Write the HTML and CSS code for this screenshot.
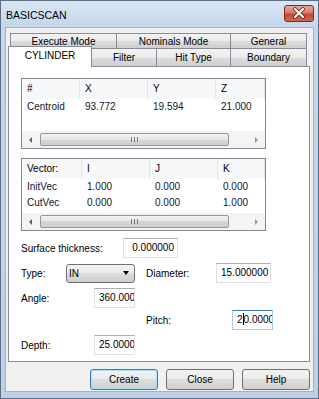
FILE: index.html
```html
<!DOCTYPE html>
<html lang="en">
<head>
    <meta charset="UTF-8">
    <title>BASICSCAN</title>
    <link rel="stylesheet" href="styles.css">
</head>
<body>
    <div class="window">
        <div class="titlebar">
            <span class="title">BASICSCAN</span>
            <div class="close">
                <svg width="14" height="12" viewBox="0 0 14 12">
                    <path d="M3 2 L11 10 M11 2 L3 10" stroke="#5a1c14" stroke-width="3.6" stroke-linecap="round"/>
                    <path d="M3 2 L11 10 M11 2 L3 10" stroke="#ffffff" stroke-width="2.2" stroke-linecap="round"/>
                </svg>
            </div>
        </div>

        <div class="client">
            <div class="tabs">
                <div class="tab-row back">
                    <div class="tab" style="width: 107px;">Execute Mode</div>
                    <div class="tab" style="width: 115px;">Nominals Mode</div>
                    <div class="tab" style="width: 77px;">General</div>
                </div>
                <div class="tab-row front">
                    <div class="tab active" style="width: 84px;">CYLINDER</div>
                    <div class="tab" style="width: 66px;">Filter</div>
                    <div class="tab" style="width: 75px;">Hit Type</div>
                    <div class="tab" style="width: 77px;">Boundary</div>
                </div>
            </div>

            <div class="panel">
                <div class="list list-points">
                    <div class="list-head">
                        <div class="cell c1">#</div>
                        <div class="cell c2">X</div>
                        <div class="cell c3">Y</div>
                        <div class="cell c4">Z</div>
                    </div>
                    <div class="list-body">
                        <div class="list-row">
                            <div class="cell c1">Centroid</div>
                            <div class="cell c2">93.772</div>
                            <div class="cell c3">19.594</div>
                            <div class="cell c4">21.000</div>
                        </div>
                    </div>
                    <div class="hscroll">
                        <div class="arrow left"></div>
                        <div class="thumb"><span class="grip"></span></div>
                        <div class="track"></div>
                        <div class="arrow right"></div>
                    </div>
                </div>

                <div class="list list-vectors">
                    <div class="list-head">
                        <div class="cell c1">Vector:</div>
                        <div class="cell c2">I</div>
                        <div class="cell c3">J</div>
                        <div class="cell c4">K</div>
                    </div>
                    <div class="list-body">
                        <div class="list-row">
                            <div class="cell c1">InitVec</div>
                            <div class="cell c2">1.000</div>
                            <div class="cell c3">0.000</div>
                            <div class="cell c4">0.000</div>
                        </div>
                        <div class="list-row">
                            <div class="cell c1">CutVec</div>
                            <div class="cell c2">0.000</div>
                            <div class="cell c3">0.000</div>
                            <div class="cell c4">1.000</div>
                        </div>
                    </div>
                    <div class="hscroll">
                        <div class="arrow left"></div>
                        <div class="thumb"><span class="grip"></span></div>
                        <div class="track"></div>
                        <div class="arrow right"></div>
                    </div>
                </div>

                <div class="form">
                    <div class="form-row">
                        <span class="label" style="width: 102px;">Surface thickness:</span>
                        <div class="field" style="width: 55px;">0.000000</div>
                    </div>
                    <div class="form-row">
                        <span class="label" style="width: 45px;">Type:</span>
                        <div class="combo">
                            <span>IN</span>
                            <span class="caret-down"></span>
                        </div>
                        <span class="label label-right" style="width: 70px;">Diameter:</span>
                        <div class="field" style="width: 55px;">15.000000</div>
                    </div>
                    <div class="form-row">
                        <span class="label" style="width: 73px;">Angle:</span>
                        <div class="field" style="width: 41px;">360.000000</div>
                    </div>
                    <div class="form-row tight">
                        <span class="label indent" style="width: 86px;">Pitch:</span>
                        <div class="field focus" style="width: 41px;">2<span class="cursor"></span>0.000000</div>
                    </div>
                    <div class="form-row">
                        <span class="label" style="width: 73px;">Depth:</span>
                        <div class="field" style="width: 41px;">25.000000</div>
                    </div>
                </div>
            </div>

            <div class="buttons">
                <button class="btn default">Create</button>
                <button class="btn">Close</button>
                <button class="btn">Help</button>
            </div>
        </div>
    </div>
</body>
</html>
```

FILE: styles.css
```css
body{
    margin: 0;
    font-family: 'Liberation Sans', Arial, sans-serif;
    font-size: 10px;
    color: #000;
    background: #c3d5e9;
}
.window{
    width: 319px;
    height: 399px;
    box-sizing: border-box;
    border: 1px solid #5d7088;
    background: linear-gradient(#dae6f3, #c4d7eb 26px, #bdd0e6);
    display: flex;
    flex-direction: column;
}

/* title bar */
.titlebar{
    height: 26px;
    display: flex;
    align-items: center;
    justify-content: space-between;
    padding: 0 4px 0 5px;
}
.title{
    font-size: 10.5px;
    margin-top: 1px;
}
.close{
    width: 28px;
    height: 15px;
    margin-top: -2px;
    border: 1px solid #7b2a1f;
    border-radius: 3px;
    background: linear-gradient(#e9a99c, #d57a68 45%, #c24a33 55%, #cf6a4e);
    display: flex;
    align-items: center;
    justify-content: center;
}

/* client area */
.client{
    flex: 1;
    margin: 0 4px 6px 4px;
    border: 1px solid #9fb2c8;
    background: #f0f0f0;
    display: flex;
    flex-direction: column;
    padding-top: 5px;
}

/* tabs */
.tab-row{
    display: flex;
}
.tab-row.back{
    height: 15px;
    margin-left: 4px;
}
.tab-row.front{
    height: 18px;
    margin-left: 2px;
}
.tab{
    box-sizing: border-box;
    border: 1px solid #898c95;
    border-bottom: none;
    margin-left: -1px;
    background: linear-gradient(#f3f3f3, #ebebeb 50%, #dddddd 50%, #cfcfcf);
    display: flex;
    align-items: center;
    justify-content: center;
}
.tab-row .tab:first-child{
    margin-left: 0;
}
.tab-row.back .tab{
    height: 15px;
}
.tab-row.front .tab{
    height: 18px;
}
.tab-row.front .tab.active{
    position: relative;
    z-index: 1;
    height: 21px;
    margin-top: -2px;
    background: #fff;
    padding-bottom: 3px;
}

/* panel */
.panel{
    height: 296px;
    box-sizing: border-box;
    margin: 0 3px 0 2px;
    border: 1px solid #898c95;
    background: #fff;
    padding: 11px 0 0 12px;
}

/* list views */
.list{
    width: 245px;
    box-sizing: border-box;
    border: 1px solid #828790;
    display: flex;
    flex-direction: column;
    overflow: hidden;
}
.list-points{
    height: 71px;
}
.list-vectors{
    height: 73px;
    margin-top: 9px;
}
.list-head, .list-row{
    display: flex;
}
.list-head{
    height: 20px;
    background: #f7f8fa;
}
.list-head .cell{
    border-right: 1px solid #e5e5e5;
    line-height: 20px;
}
.list-body{
    flex: 1;
}
.list-row .cell{
    line-height: 16px;
}
.cell{
    box-sizing: border-box;
    padding-left: 5px;
    white-space: nowrap;
}
.list-points .c1{ width: 58px; }
.list-vectors .c1{ width: 60px; }
.c2, .c3{ width: 68px; }
.c4{ flex: 1; }
.list-row .cell{
    color: #10182c;
}

/* horizontal scrollbar */
.hscroll{
    height: 17px;
    display: flex;
    align-items: center;
    background: #f4f4f4;
}
.arrow{
    width: 17px;
    height: 17px;
    display: flex;
    align-items: center;
    justify-content: center;
}
.arrow::before{
    content: "";
    border-top: 3.5px solid transparent;
    border-bottom: 3.5px solid transparent;
}
.arrow.left::before{
    border-right: 3px solid #606060;
}
.arrow.right::before{
    border-left: 3px solid #9a9a9a;
}
.thumb{
    width: 189px;
    height: 13px;
    box-sizing: border-box;
    margin-left: 1px;
    border: 1px solid #979797;
    border-radius: 2px;
    background: linear-gradient(#f3f3f3, #e6e6e6 50%, #d6d6d6 50%, #cfcfcf);
    display: flex;
    align-items: center;
    justify-content: center;
}
.grip{
    width: 7px;
    height: 5px;
    background: linear-gradient(90deg, #7a7a7a 1px, transparent 1px, transparent 3px, #7a7a7a 3px, #7a7a7a 4px, transparent 4px, transparent 6px, #7a7a7a 6px);
}
.track{
    flex: 1;
}

/* form */
.form{
    margin-top: 7px;
}
.form-row{
    display: flex;
    align-items: center;
    height: 20px;
    margin-top: 5px;
}
.form-row:first-child{
    margin-top: 0;
}
.form-row.tight{
    margin-top: 2px;
}
.label{
    white-space: nowrap;
}
.label-right{
    margin-left: 11px;
}
.indent{
    margin-left: 125px;
}
.field{
    height: 20px;
    box-sizing: border-box;
    border: 1px solid #dfe0e6;
    border-top-color: #abadb3;
    background: #fff;
    padding: 0 3px 0 4px;
    line-height: 18px;
    text-align: right;
    white-space: nowrap;
    overflow: hidden;
}
.field.focus{
    border-color: #a9cbee;
    border-top-color: #3d7bad;
}
.cursor{
    display: inline-block;
    width: 1px;
    height: 12px;
    background: #000;
    vertical-align: -2px;
}
.combo{
    width: 69px;
    height: 19px;
    box-sizing: border-box;
    border: 1px solid #707070;
    border-radius: 3px;
    background: linear-gradient(#f2f2f2, #ebebeb 50%, #dddddd 50%, #cfcfcf);
    display: flex;
    align-items: center;
    justify-content: space-between;
    padding: 0 5px 0 2px;
}
.caret-down{
    border-left: 3.5px solid transparent;
    border-right: 3.5px solid transparent;
    border-top: 4px solid #000;
}

/* buttons */
.buttons{
    display: flex;
    justify-content: flex-end;
    gap: 8px;
    margin: 7px 3px 0 0;
}
.btn{
    width: 68px;
    height: 21px;
    border: 1px solid #707070;
    border-radius: 3px;
    background: linear-gradient(#f2f2f2, #ebebeb 50%, #dddddd 50%, #cfcfcf);
    font-family: 'Liberation Sans', Arial, sans-serif;
    font-size: 10px;
    color: #000;
    padding: 0;
}
.btn.default{
    border-color: #3c7fb1;
    box-shadow: inset 0 0 0 1px #a6dcf7;
}
```
